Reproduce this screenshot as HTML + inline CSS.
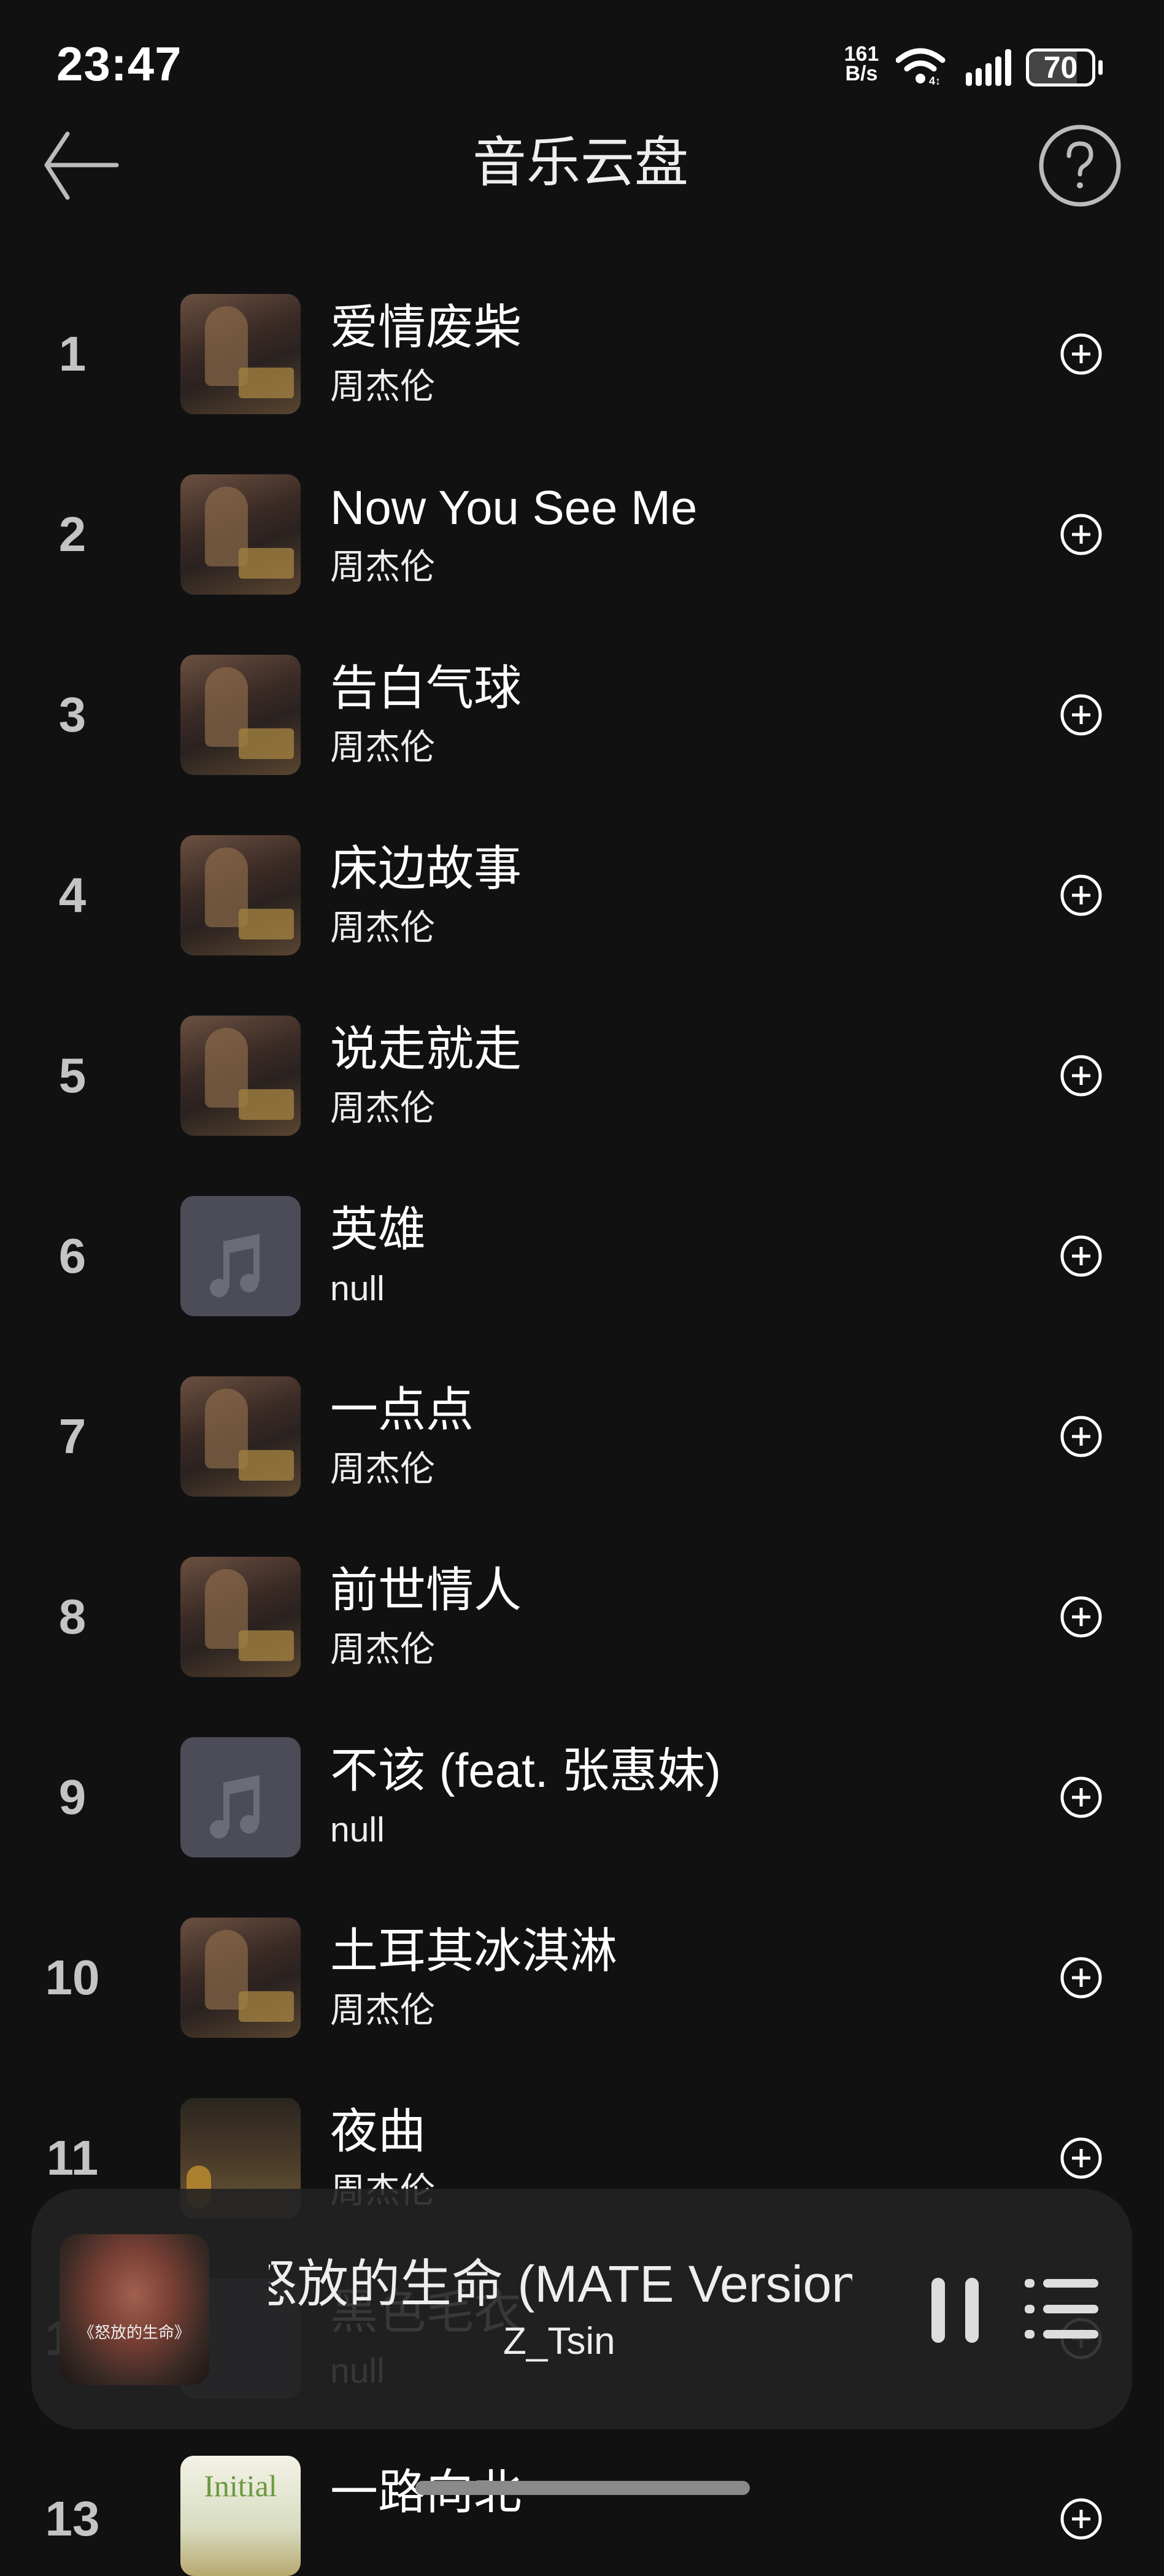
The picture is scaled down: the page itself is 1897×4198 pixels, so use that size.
<!DOCTYPE html>
<html><head><meta charset="utf-8"><style>
*{margin:0;padding:0;box-sizing:border-box}
body{width:1897px;height:4096px;background:#111112;overflow:hidden;position:relative;font-family:"Liberation Sans","Noto Sans CJK SC",sans-serif;color:#fff}
.a{position:absolute}
.num{position:absolute;left:60px;width:116px;text-align:center;font-size:80px;font-weight:bold;color:#c4c4c4;line-height:80px}
.cov{position:absolute;left:294px;width:196px;height:196px;border-radius:22px;overflow:hidden;background:linear-gradient(160deg,#6b5040 0%,#3a2a25 40%,#2a2220 60%,#5a4530 100%)}
.cov .g{position:absolute;left:95px;top:120px;width:90px;height:50px;background:#a08040;border-radius:6px;opacity:.8}
.cov .m{position:absolute;left:40px;top:20px;width:70px;height:130px;background:#8a6a4a;border-radius:35px 35px 10px 10px;opacity:.7}
.ph{background:#4b4c57}
.t{position:absolute;left:538px;font-size:78px;line-height:90px;white-space:nowrap;color:#fff}
.s{position:absolute;left:538px;font-size:57px;line-height:66px;white-space:nowrap;color:#eee}
.plus{position:absolute;left:1727px;width:70px;height:70px}
</style></head><body>
<!-- status -->
<div class="a" style="left:92px;top:64px;font-size:78px;font-weight:bold;line-height:80px;letter-spacing:1px">23:47</div>
<div class="a" style="left:1370px;top:72px;font-size:34px;font-weight:bold;line-height:32px;text-align:center;width:68px">161<br>B/s</div>
<svg class="a" style="left:1460px;top:76px" width="84" height="64" viewBox="0 0 84 64"><path d="M4 22 Q40 -8 76 22" stroke="#fff" stroke-width="9" fill="none" stroke-linecap="round"/><path d="M18 36 Q40 18 62 36" stroke="#fff" stroke-width="9" fill="none" stroke-linecap="round"/><circle cx="40" cy="52" r="8" fill="#fff"/><text x="54" y="62" font-size="18" font-weight="bold" fill="#fff" font-family="Liberation Sans">4↕</text></svg>
<svg class="a" style="left:1574px;top:78px" width="80" height="62"><rect x="0" y="40" width="10" height="22" rx="4" fill="#fff"/><rect x="16" y="33" width="10" height="29" rx="4" fill="#fff"/><rect x="32" y="25" width="10" height="37" rx="4" fill="#fff"/><rect x="48" y="14" width="10" height="48" rx="4" fill="#fff"/><rect x="64" y="2" width="10" height="60" rx="4" fill="#fff"/></svg>
<div class="a" style="left:1672px;top:79px;width:113px;height:62px;border:5px solid #fff;border-radius:16px;overflow:hidden"><div style="width:78px;height:100%;background:#444"></div><div class="a" style="left:0;top:0;width:100%;text-align:center;font-size:50px;font-weight:bold;line-height:52px">70</div></div>
<div class="a" style="left:1790px;top:98px;width:7px;height:24px;background:#fff;border-radius:3px"></div>
<!-- header -->
<svg class="a" style="left:70px;top:214px" width="126" height="114"><path d="M120 55 H6 M40 4 L6 55 L40 108" stroke="#bbb" stroke-width="7" fill="none" stroke-linecap="round" stroke-linejoin="round"/></svg>
<div class="a" style="left:770px;top:210px;font-size:88px;line-height:110px;color:#eee">音乐云盘</div>
<svg class="a" style="left:1692px;top:202px" width="136" height="136"><circle cx="68" cy="68" r="63" stroke="#bbb" stroke-width="7" fill="none"/><path d="M50 52 Q50 32 68 32 Q86 32 86 50 Q86 62 72 70 Q68 74 68 82" stroke="#bbb" stroke-width="7" fill="none" stroke-linecap="round"/><circle cx="68" cy="100" r="5" fill="#bbb"/></svg>

<!-- rows -->
<div id="rows"></div>
<!-- row 1 -->
<div class="num" style="top:537px">1</div><div class="cov" style="top:479px"><div class="m"></div><div class="g"></div></div><div class="t" style="top:488px">爱情废柴</div><div class="s" style="top:597px">周杰伦</div>
<div class="num" style="top:831px">2</div><div class="cov" style="top:773px"><div class="m"></div><div class="g"></div></div><div class="t" style="top:782px">Now You See Me</div><div class="s" style="top:891px">周杰伦</div>
<div class="num" style="top:1125px">3</div><div class="cov" style="top:1067px"><div class="m"></div><div class="g"></div></div><div class="t" style="top:1076px">告白气球</div><div class="s" style="top:1185px">周杰伦</div>
<div class="num" style="top:1419px">4</div><div class="cov" style="top:1361px"><div class="m"></div><div class="g"></div></div><div class="t" style="top:1370px">床边故事</div><div class="s" style="top:1479px">周杰伦</div>
<div class="num" style="top:1713px">5</div><div class="cov" style="top:1655px"><div class="m"></div><div class="g"></div></div><div class="t" style="top:1664px">说走就走</div><div class="s" style="top:1773px">周杰伦</div>
<div class="num" style="top:2007px">6</div><div class="cov ph" style="top:1949px"><svg width="196" height="196"><path d="M75 150 V78 L124 68 V140" stroke="#6b6c77" stroke-width="10" fill="none"/><path d="M75 78 L124 68 V84 L75 94Z" fill="#6b6c77"/><circle cx="63" cy="150" r="15" fill="#6b6c77"/><circle cx="112" cy="142" r="15" fill="#6b6c77"/></svg></div><div class="t" style="top:1958px">英雄</div><div class="s" style="top:2067px">null</div>
<div class="num" style="top:2301px">7</div><div class="cov" style="top:2243px"><div class="m"></div><div class="g"></div></div><div class="t" style="top:2252px">一点点</div><div class="s" style="top:2361px">周杰伦</div>
<div class="num" style="top:2595px">8</div><div class="cov" style="top:2537px"><div class="m"></div><div class="g"></div></div><div class="t" style="top:2546px">前世情人</div><div class="s" style="top:2655px">周杰伦</div>
<div class="num" style="top:2889px">9</div><div class="cov ph" style="top:2831px"><svg width="196" height="196"><path d="M75 150 V78 L124 68 V140" stroke="#6b6c77" stroke-width="10" fill="none"/><path d="M75 78 L124 68 V84 L75 94Z" fill="#6b6c77"/><circle cx="63" cy="150" r="15" fill="#6b6c77"/><circle cx="112" cy="142" r="15" fill="#6b6c77"/></svg></div><div class="t" style="top:2840px">不该 (feat. 张惠妹)</div><div class="s" style="top:2949px">null</div>
<div class="num" style="top:3183px">10</div><div class="cov" style="top:3125px"><div class="m"></div><div class="g"></div></div><div class="t" style="top:3134px">土耳其冰淇淋</div><div class="s" style="top:3243px">周杰伦</div>
<div class="num" style="top:3477px">11</div><div class="cov" style="top:3419px;background:linear-gradient(180deg,#2a2520,#4a3a28 50%,#6a5a3a)"><div class="g" style="left:10px;top:110px;width:40px;height:70px;border-radius:20px;background:#c09030"></div></div><div class="t" style="top:3428px">夜曲</div><div class="s" style="top:3537px">周杰伦</div>
<div class="num" style="top:3771px">12</div><div class="cov ph" style="top:3713px"></div><div class="t" style="top:3722px">黑色毛衣</div><div class="s" style="top:3831px">null</div>
<div class="num" style="top:4065px">13</div><div class="cov" style="top:4002px;background:linear-gradient(180deg,#f4f2e8,#d8dcc0 60%,#b8a870)"><div style="text-align:center;font-family:'Liberation Serif',serif;color:#6a9a40;font-size:50px;margin-top:20px">Initial</div></div><div class="t" style="top:4016px">一路向北</div>

<!-- plus icons -->
<svg class="plus" style="top:542px" viewBox="0 0 70 70"><circle cx="35" cy="35" r="31" stroke="#fff" stroke-width="5" fill="none"/><path d="M35 20V50M20 35H50" stroke="#fff" stroke-width="5"/></svg>
<svg class="plus" style="top:836px" viewBox="0 0 70 70"><circle cx="35" cy="35" r="31" stroke="#fff" stroke-width="5" fill="none"/><path d="M35 20V50M20 35H50" stroke="#fff" stroke-width="5"/></svg>
<svg class="plus" style="top:1130px" viewBox="0 0 70 70"><circle cx="35" cy="35" r="31" stroke="#fff" stroke-width="5" fill="none"/><path d="M35 20V50M20 35H50" stroke="#fff" stroke-width="5"/></svg>
<svg class="plus" style="top:1424px" viewBox="0 0 70 70"><circle cx="35" cy="35" r="31" stroke="#fff" stroke-width="5" fill="none"/><path d="M35 20V50M20 35H50" stroke="#fff" stroke-width="5"/></svg>
<svg class="plus" style="top:1718px" viewBox="0 0 70 70"><circle cx="35" cy="35" r="31" stroke="#fff" stroke-width="5" fill="none"/><path d="M35 20V50M20 35H50" stroke="#fff" stroke-width="5"/></svg>
<svg class="plus" style="top:2012px" viewBox="0 0 70 70"><circle cx="35" cy="35" r="31" stroke="#fff" stroke-width="5" fill="none"/><path d="M35 20V50M20 35H50" stroke="#fff" stroke-width="5"/></svg>
<svg class="plus" style="top:2306px" viewBox="0 0 70 70"><circle cx="35" cy="35" r="31" stroke="#fff" stroke-width="5" fill="none"/><path d="M35 20V50M20 35H50" stroke="#fff" stroke-width="5"/></svg>
<svg class="plus" style="top:2600px" viewBox="0 0 70 70"><circle cx="35" cy="35" r="31" stroke="#fff" stroke-width="5" fill="none"/><path d="M35 20V50M20 35H50" stroke="#fff" stroke-width="5"/></svg>
<svg class="plus" style="top:2894px" viewBox="0 0 70 70"><circle cx="35" cy="35" r="31" stroke="#fff" stroke-width="5" fill="none"/><path d="M35 20V50M20 35H50" stroke="#fff" stroke-width="5"/></svg>
<svg class="plus" style="top:3188px" viewBox="0 0 70 70"><circle cx="35" cy="35" r="31" stroke="#fff" stroke-width="5" fill="none"/><path d="M35 20V50M20 35H50" stroke="#fff" stroke-width="5"/></svg>
<svg class="plus" style="top:3482px" viewBox="0 0 70 70"><circle cx="35" cy="35" r="31" stroke="#fff" stroke-width="5" fill="none"/><path d="M35 20V50M20 35H50" stroke="#fff" stroke-width="5"/></svg>
<svg class="plus" style="top:3776px" viewBox="0 0 70 70"><circle cx="35" cy="35" r="31" stroke="#fff" stroke-width="5" fill="none"/><path d="M35 20V50M20 35H50" stroke="#fff" stroke-width="5"/></svg>
<svg class="plus" style="top:4070px" viewBox="0 0 70 70"><circle cx="35" cy="35" r="31" stroke="#fff" stroke-width="5" fill="none"/><path d="M35 20V50M20 35H50" stroke="#fff" stroke-width="5"/></svg>

<!-- player -->
<div class="a" style="left:51px;top:3567px;width:1794px;height:392px;border-radius:80px;background:rgba(34,34,35,0.9)"></div>
<div class="a" style="left:97px;top:3641px;width:244px;height:246px;border-radius:30px;overflow:hidden;background:radial-gradient(ellipse at 50% 40%,#a06050 0%,#7a4035 35%,#3a2a25 70%,#1a1515 100%)"><div style="position:absolute;top:100px;left:0;width:100%;text-align:center;font-size:26px;color:#eee;font-family:'Noto Sans CJK SC',sans-serif;top:140px">《怒放的生命》</div></div>
<div class="a" style="left:438px;top:3672px;width:951px;height:100px;overflow:hidden"><div style="position:absolute;left:-38px;top:0;font-size:84px;line-height:100px;white-space:nowrap;color:#eee">怒放的生命 (MATE Version)</div></div>
<div class="a" style="left:820px;top:3780px;font-size:62px;line-height:72px;color:#eee">Z_Tsin</div>
<div class="a" style="left:1518px;top:3712px;width:22px;height:106px;border-radius:11px;background:#ddd"></div>
<div class="a" style="left:1573px;top:3712px;width:22px;height:106px;border-radius:11px;background:#ddd"></div>
<div class="a" style="left:1670px;top:3714px;width:16px;height:14px;border-radius:6px;background:#ddd"></div>
<div class="a" style="left:1670px;top:3756px;width:16px;height:14px;border-radius:6px;background:#ddd"></div>
<div class="a" style="left:1670px;top:3797px;width:16px;height:14px;border-radius:6px;background:#ddd"></div>
<div class="a" style="left:1700px;top:3714px;width:90px;height:14px;border-radius:7px;background:#ddd"></div>
<div class="a" style="left:1700px;top:3756px;width:90px;height:14px;border-radius:7px;background:#ddd"></div>
<div class="a" style="left:1700px;top:3797px;width:90px;height:14px;border-radius:7px;background:#ddd"></div>
<div class="a" style="left:677px;top:4043px;width:545px;height:23px;border-radius:12px;background:#8a8a8a"></div>
</body></html>
